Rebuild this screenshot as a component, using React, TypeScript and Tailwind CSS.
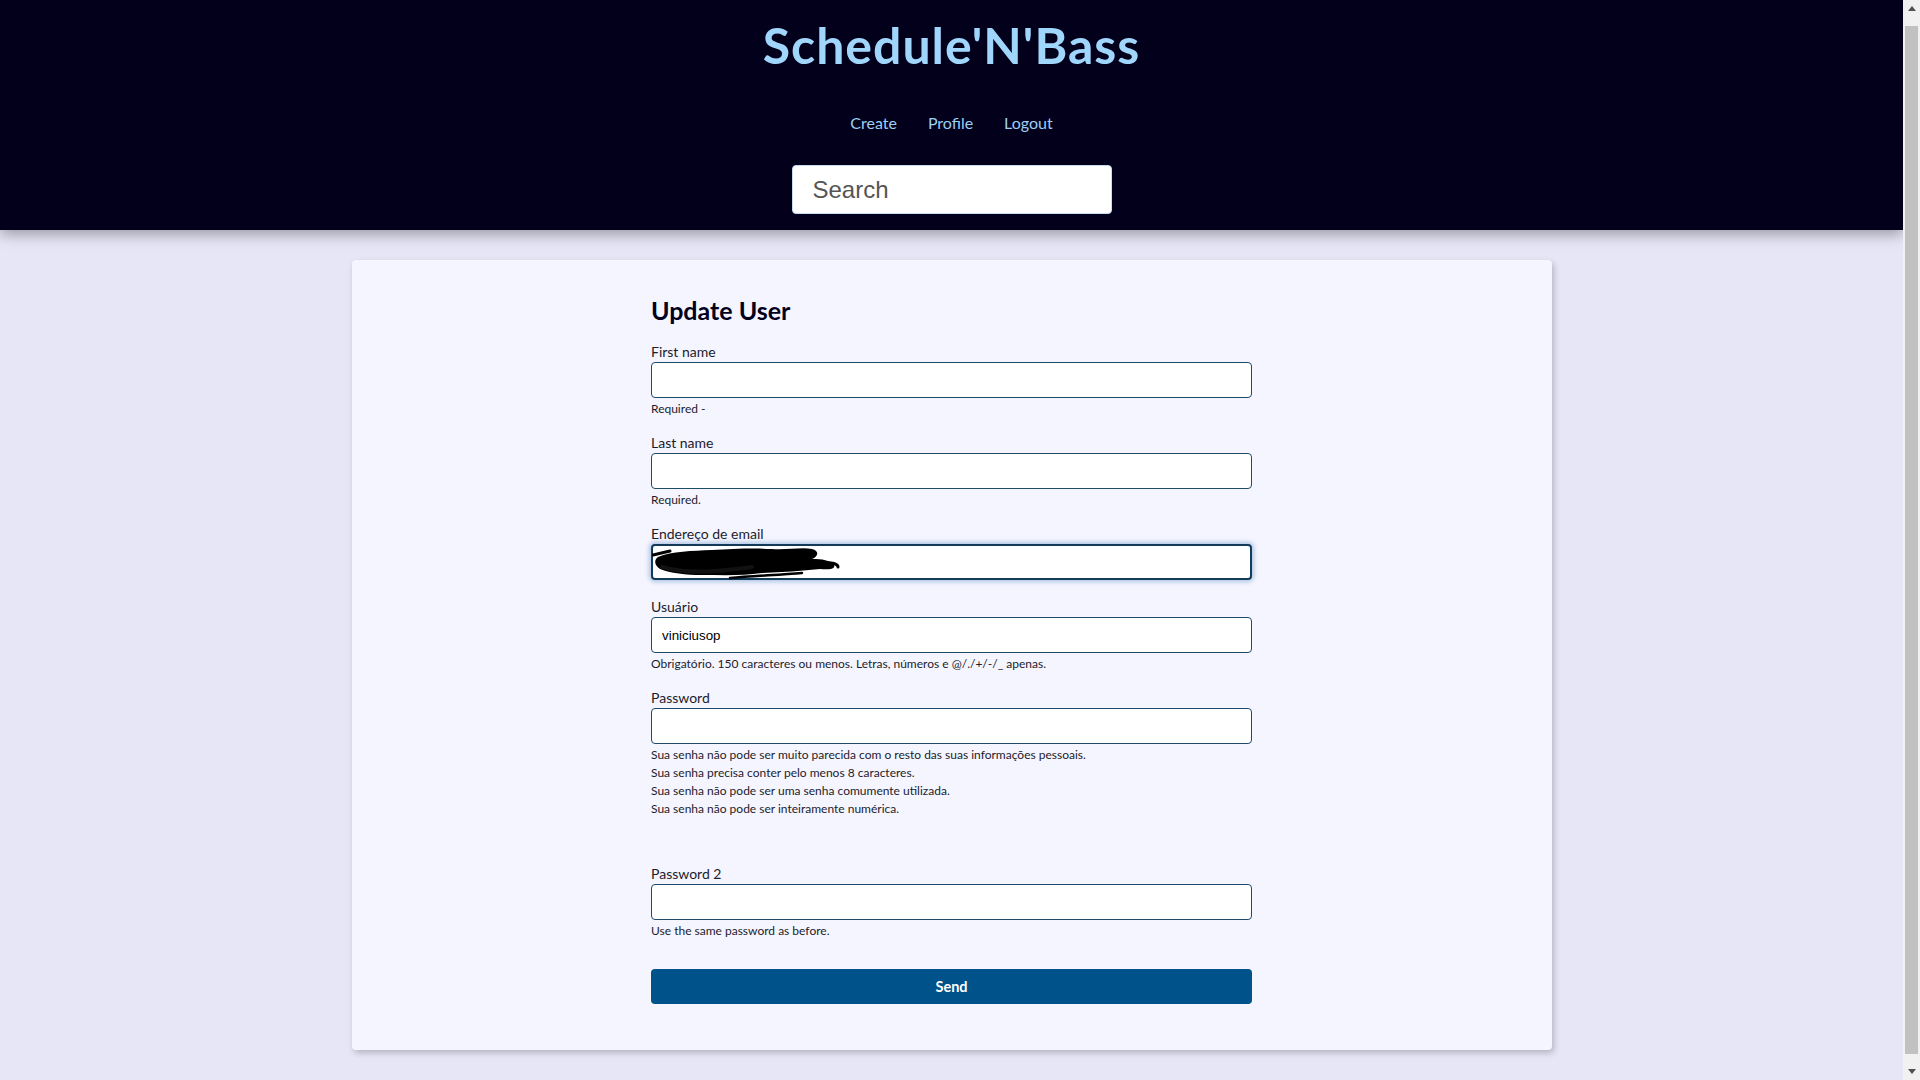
import React from "react";

type Field = {
  id: string;
  label: string;
  type?: string;
  value?: string;
  help?: string[];
  focused?: boolean;
  redacted?: boolean;
  gap?: string;
};

const fields: Field[] = [
  { id: "first_name", label: "First name", help: ["Required -"] },
  { id: "last_name", label: "Last name", help: ["Required."] },
  { id: "email", label: "Endereço de email", type: "email", focused: true, redacted: true, gap: "mb-[20px]" },
  {
    id: "username",
    label: "Usuário",
    value: "viniciusop",
    help: ["Obrigatório. 150 caracteres ou menos. Letras, números e @/./+/-/_ apenas."],
  },
  {
    id: "password1",
    label: "Password",
    type: "password",
    help: [
      "Sua senha não pode ser muito parecida com o resto das suas informações pessoais.",
      "Sua senha precisa conter pelo menos 8 caracteres.",
      "Sua senha não pode ser uma senha comumente utilizada.",
      "Sua senha não pode ser inteiramente numérica.",
    ],
    gap: "mb-[49px]",
  },
  {
    id: "password2",
    label: "Password 2",
    type: "password",
    help: ["Use the same password as before."],
    gap: "mb-[29px]",
  },
];

// scribble drawn over the e-mail value in the screenshot
function Redaction() {
  return (
    <svg
      className="absolute left-[1px] top-[1px] pointer-events-none"
      width="192"
      height="36"
      viewBox="0 0 192 36"
    >
      <path d="M1 10 L18 6" stroke="#000" strokeWidth="3" strokeLinecap="round" fill="none" />
      <path
        d="M6 12 C20 6 40 6 60 5 C80 4 100 3 120 4 C135 5 150 2 160 4 C168 6 166 12 160 14 C170 14 178 15 182 20 C184 24 176 25 168 24 C150 26 130 27 110 28 C90 31 70 30 50 30 C34 30 18 28 8 24 C2 20 2 15 6 12 Z"
        fill="#000"
      />
      <path d="M10 22 C40 30 70 26 100 22" stroke="#111" strokeWidth="4" strokeLinecap="round" fill="none" />
      <path d="M78 33 C100 31 125 30 150 28" stroke="#000" strokeWidth="2.5" strokeLinecap="round" fill="none" />
      <path d="M172 18 C180 17 186 19 186 22" stroke="#000" strokeWidth="3" strokeLinecap="round" fill="none" />
    </svg>
  );
}

function FormField({ f }: { f: Field }) {
  return (
    <div className={f.gap ?? "mb-[18px]"}>
      <label htmlFor={f.id} className="block mb-[3px] text-[14px] leading-[14px] text-[#1c1c2c]">
        {f.label}
      </label>
      <div className="relative">
        <input
          id={f.id}
          type={f.type ?? "text"}
          defaultValue={f.value}
          className={
            f.focused
              ? "block w-full h-[36px] bg-white rounded-[4px] border-2 border-[#123a5a] px-[9px] text-[13.33px] font-['Liberation_Sans',Arial,sans-serif] text-black outline-none shadow-[0_0_4px_2px_rgba(90,140,190,0.45)]"
              : "block w-full h-[36px] bg-white rounded-[4px] border border-[#1f4b6b] px-[10px] text-[13.33px] font-['Liberation_Sans',Arial,sans-serif] text-black outline-none"
          }
        />
        {f.redacted && <Redaction />}
      </div>
      {f.help && (
        <div className="pt-[2px] text-[12px] leading-[18px] text-[#1c1c2c]">
          {f.help.map((h) => (
            <div key={h}>{h}</div>
          ))}
        </div>
      )}
    </div>
  );
}

function Arrow({ down }: { down?: boolean }) {
  return (
    <div className="h-[17px] flex items-center justify-center">
      <svg width="8" height="5" viewBox="0 0 8 5" className={down ? "rotate-180" : ""}>
        <path d="M0 5 L4 0 L8 5 Z" fill="#505050" />
      </svg>
    </div>
  );
}

function Scrollbar() {
  return (
    <div className="w-[17px] shrink-0 bg-[#f1f1f1] flex flex-col">
      <Arrow />
      <div className="flex-1 py-[9px] px-[2px]">
        <div className="h-full bg-[#c1c1c1]" />
      </div>
      <Arrow down />
    </div>
  );
}

export default function App() {
  return (
    <div className="flex h-screen overflow-hidden font-['Lato','Noto_Sans',sans-serif]">
      <div className="flex-1 min-w-0 overflow-hidden bg-[#e6e6f7]">
        <header className="relative z-10 h-[230px] bg-[#03001c] flex flex-col items-center shadow-[0_4px_14px_rgba(0,0,0,0.35)]">
          <h1 className="mt-[16px] text-[50px] leading-[58px] font-bold tracking-[1px] text-[#a1d6fc]">
            Schedule'N'Bass
          </h1>
          <nav className="mt-[39px] flex gap-[31px] text-[16px] leading-[20px] text-[#9ccff4]">
            <a href="#">Create</a>
            <a href="#">Profile</a>
            <a href="#">Logout</a>
          </nav>
          <input
            placeholder="Search"
            className="mt-[32px] w-[320px] h-[49px] bg-white rounded-[4px] border border-[#c7dcf0] px-[20px] text-[24px] font-['Liberation_Sans',Arial,sans-serif] text-[#333] placeholder:text-[#555] outline-none"
          />
        </header>

        <main className="pt-[30px] pb-[42px] flex justify-center">
          <div className="w-[1200px] bg-[#f5f5ff] rounded-[4px] shadow-[2px_3px_6px_rgba(0,0,0,0.22)] pt-[36px] pb-[46px] flex justify-center">
            <form className="w-[601px]" onSubmit={(e) => e.preventDefault()}>
              <h2 className="mb-[20px] text-[25px] leading-[29px] font-bold text-[#03001c]">Update User</h2>
              {fields.map((f) => (
                <FormField key={f.id} f={f} />
              ))}
              <button
                type="submit"
                className="block w-full h-[35px] rounded-[4px] bg-[#00528a] text-white text-[14.5px] font-bold"
              >
                Send
              </button>
            </form>
          </div>
        </main>
      </div>
      <Scrollbar />
    </div>
  );
}
